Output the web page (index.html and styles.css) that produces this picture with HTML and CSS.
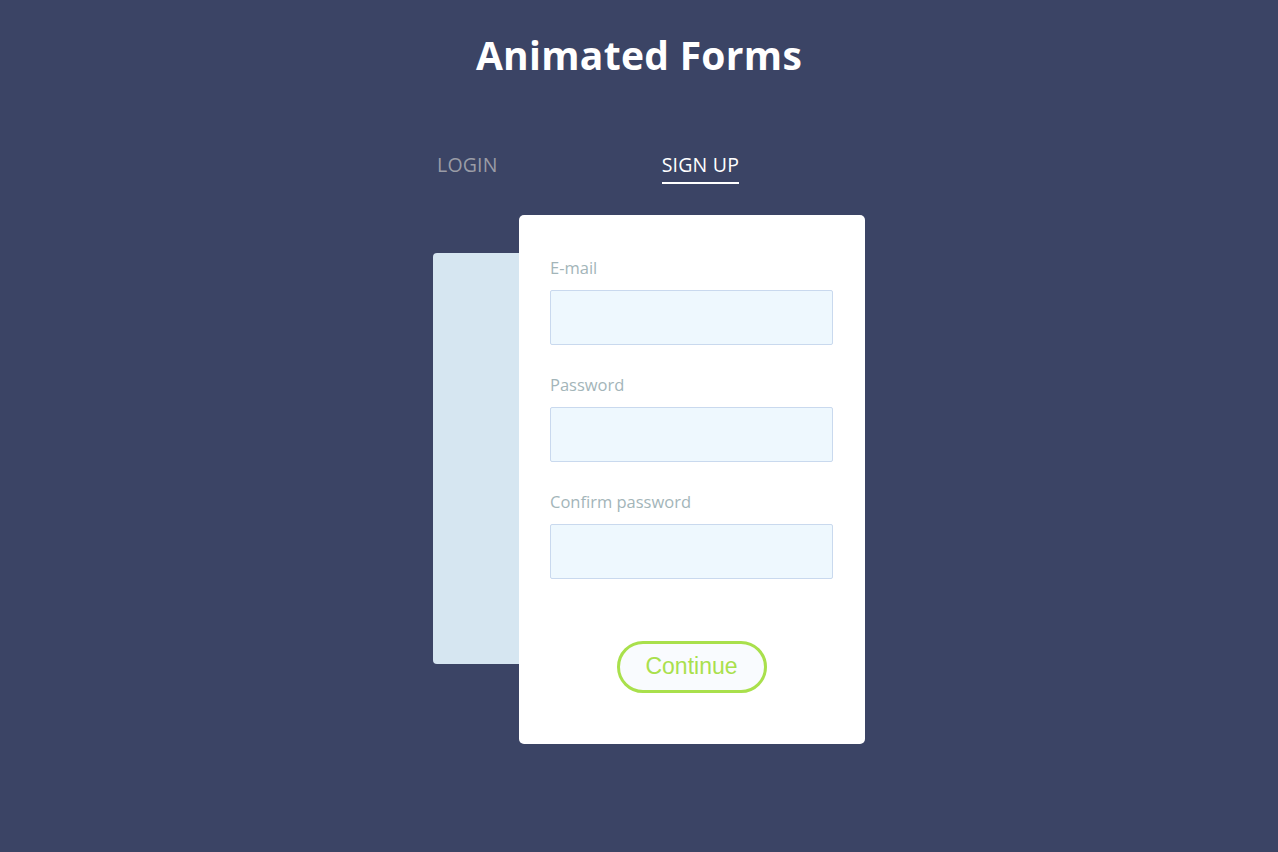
FILE: index.html
```html
<!DOCTYPE html>
<html>
<head>
<meta charset="utf-8">
<link rel="stylesheet" href="styles.css">
</head>
<body>
<h1 class="title">Animated Forms</h1>
<div class="wrap">
  <nav class="tabs">
    <span class="tab">LOGIN</span>
    <span class="tab active">SIGN UP</span>
  </nav>
  <div class="stage">
    <div class="card back"></div>
    <form class="card front">
      <label class="field">
        <span class="label">E-mail</span>
        <span class="input"></span>
      </label>
      <label class="field">
        <span class="label">Password</span>
        <span class="input"></span>
      </label>
      <label class="field">
        <span class="label">Confirm password</span>
        <span class="input"></span>
      </label>
      <div class="actions">
        <span class="btn">Continue</span>
      </div>
    </form>
  </div>
</div>
</body>
</html>
```

FILE: styles.css
```css
html, body {
  margin: 0;
  padding: 0;
}
body {
  background: #3b4465;
  font-family: "Open Sans", "Noto Sans", sans-serif;
  height: 852px;
  overflow: hidden;
}
.title {
  margin: 0;
  padding-top: 29px;
  text-align: center;
  color: #ffffff;
  font-size: 39px;
  line-height: 52px;
  font-weight: 700;
  letter-spacing: 0.3px;
}
.wrap {
  width: 452px;
  margin: 0 auto;
}
.tabs {
  display: flex;
  gap: 164px;
  padding-left: 24px;
  margin-top: 71px;
}
.tab {
  color: #9a9ca6;
  font-size: 19.5px;
  line-height: 26px;
  padding-bottom: 4px;
  letter-spacing: 0.2px;
}
.tab.active {
  color: #ffffff;
  border-bottom: 2px solid #ffffff;
}
.stage {
  display: grid;
  margin-top: 31px;
}
.card {
  grid-area: 1 / 1;
  width: 346px;
  box-sizing: border-box;
  border-radius: 5px;
}
.back {
  background: #d6e6f1;
  margin-left: 20px;
  margin-top: 38px;
  height: 411px;
  border-radius: 4px;
}
.front {
  background: #ffffff;
  margin-left: 106px;
  height: 529px;
  padding: 43px 32px 0 31px;
  z-index: 1;
  display: flex;
  flex-direction: column;
}
.field {
  display: flex;
  flex-direction: column;
  margin-bottom: 30px;
}
.label {
  color: #a3b5b9;
  font-size: 16.5px;
  line-height: 20px;
  margin-bottom: 12px;
}
.input {
  height: 55px;
  box-sizing: border-box;
  background: #eef8fe;
  border: 1px solid #c9d9ee;
  border-radius: 2px;
}
.actions {
  display: flex;
  justify-content: center;
  margin-top: 32px;
}
.btn {
  width: 150px;
  height: 52px;
  box-sizing: border-box;
  border: 3px solid #a9e04c;
  border-radius: 26px;
  background: #f9fbfe;
  color: #a9e04c;
  font-family: "Liberation Sans", Arial, sans-serif;
  font-size: 23px;
  display: flex;
  align-items: center;
  justify-content: center;
  padding-bottom: 2px;
}
```
